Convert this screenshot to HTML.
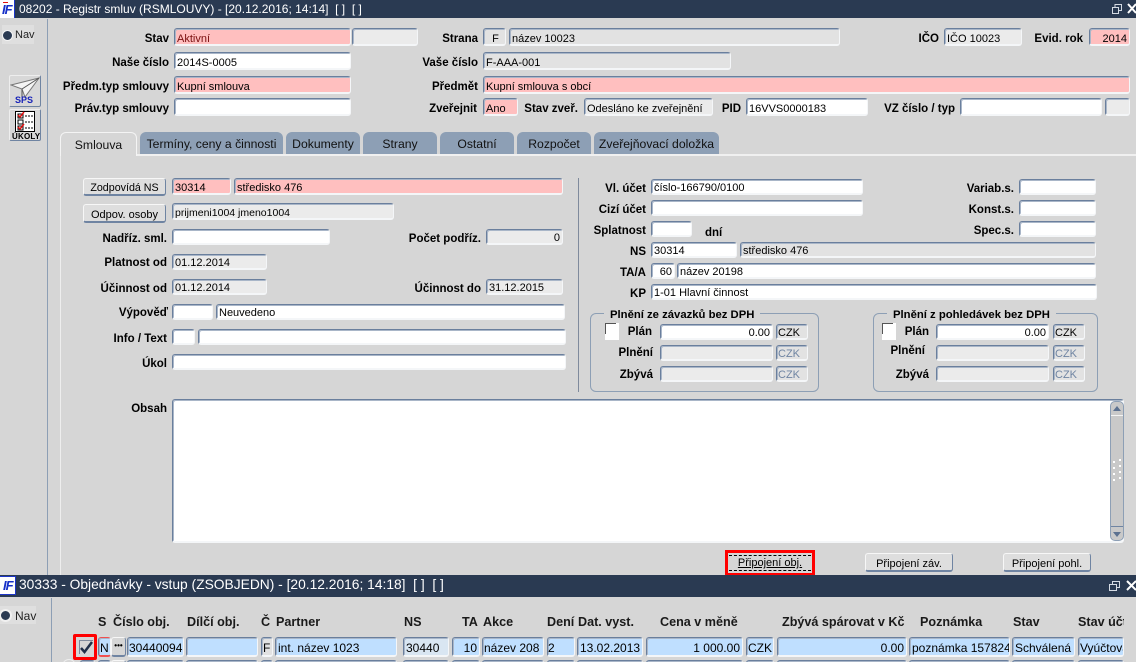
<!DOCTYPE html>
<html><head><meta charset="utf-8"><style>
html,body{margin:0;padding:0;background:#d6d6d6}
#p{position:relative;width:1136px;height:662px;overflow:hidden;background:#d6d6d6;font:11px "Liberation Sans",sans-serif;color:#000}
#p div,#p b,#p span{position:absolute;white-space:nowrap}
.t{left:0;width:1136px;background:#2a3a52}
.tt{color:#fff;line-height:18px}
.f{box-sizing:border-box;border:1px solid #6a7f9d;border-right:1px solid #f4f6f8;border-bottom:2px solid #f4f6f8;border-radius:3px;box-shadow:inset 1px 1px 0 #a9b6c8;padding-left:2px;line-height:13px;overflow:hidden;background:#fff}
.f[style*="height:18px"]{padding-top:3px;line-height:15px}
.f[style*="height:17px"]{padding-top:3px}
.f[style*="height:16px"]{padding-top:2px}
.g{background:#ebebeb}.e{background:#e2e2e2}.r{background:#ffbfbf}.u{text-align:right;padding-right:2px;padding-left:0}
.c{background:#e2e2e2;color:#6f84a2;font-size:11px}
.f.bl{background:#bfdfff;font-size:12px;line-height:16px;padding-top:2px}
.l{left:0;text-align:right;font-weight:bold;line-height:14px;height:14px;font-size:11.500px;margin-top:1px}
.h{font-weight:bold;font-size:12.600px;line-height:14px;top:615px;color:#1a1a1a}
.tab{top:132px;height:22px;box-sizing:border-box;background:#8d9fb5;border-radius:6px 6px 0 0;text-align:center;font-size:12.200px;line-height:25px;color:#111}
.btn{box-sizing:border-box;background:#dedede;border:1px solid #f7f7f7;border-right:1px solid #6f84a2;border-bottom:2px solid #6f84a2;border-radius:3px;text-align:center;font-size:11px}
.box{box-sizing:border-box;border:1px solid #8d9fb5;border-radius:6px}
.leg{background:#d6d6d6;font-weight:bold;font-size:11.300px;top:308px;line-height:14px;padding:0 6px}
.cb{background:#fff;width:14px;height:17px;top:323px;box-sizing:border-box}
.cb span{left:0;top:0;width:10px;height:10px;border-left:1px solid #555;border-top:1px solid #555}
.logo{font:italic bold 13px/15px "Liberation Sans",sans-serif;color:#1630c8;letter-spacing:-1px}
</style></head><body><div id="p">

<div class="t" style="top:0;height:18px"></div>
<div style="left:0;top:0;width:15px;height:18px;background:#fff;border-right:1px solid #1d35c8;box-sizing:border-box"></div>
<b class="logo" style="left:2px;top:2px">IF</b>
<div style="left:3px;top:2px;width:5px;height:1px;background:#e01010"></div>
<div class="tt" style="left:19px;top:0;font-size:12px">08202 - Registr smluv (RSMLOUVY) - [20.12.2016; 14:14]&nbsp; [ ]&nbsp; [ ]</div>
<svg style="position:absolute;left:1110px;top:2px" width="26" height="14" fill="none" stroke="#fff"><path d="M2.500 5.500h6v6h-6zM5 5V2.500h6.500v6H9" stroke="#d5dbe4"/><path d="M18 2l8 9M26 2l-8 9" stroke-width="2"/></svg>

<div style="left:47px;top:19px;width:1px;height:556px;background:#8d9fb5"></div>
<div style="left:2px;top:25px;width:32px;height:19px;background:#dfdfdf"></div>
<div style="left:2px;top:30px;width:9px;height:9px;border-radius:50%;background:#2a3a52;border:1px solid #f4f4f4"></div>
<div style="left:15px;top:28px;line-height:14px;color:#222">Nav</div>

<div style="left:9px;top:75px;width:32px;height:32px;box-sizing:border-box;background:#d8d8d8;border:1px solid #eee;border-right:1px solid #6f84a2;border-bottom:1px solid #6f84a2;border-radius:2px"></div>
<svg style="position:absolute;left:10px;top:77px" width="30" height="20"><path d="M1 8l28-7-14 19-3-8z" fill="#f4f4f4" stroke="#777"/><path d="M12 12l17-11M12 12v8l3 0" fill="none" stroke="#555"/></svg>
<b style="left:15px;top:95px;font-size:9px;line-height:10px;color:#1722b8">SPS</b>
<div style="left:9px;top:109px;width:32px;height:32px;box-sizing:border-box;background:#d8d8d8;border:1px solid #eee;border-right:1px solid #6f84a2;border-bottom:1px solid #6f84a2;border-radius:2px"></div>
<svg style="position:absolute;left:15px;top:111px" width="20" height="21"><rect x=".5" y=".5" width="19" height="20" fill="#fff" stroke="#000"/><path d="M3 3h5v4H3zM3 9h5v4H3zM3 15h5v4H3z" fill="#fff" stroke="#000"/><path d="M3 4l2 2 4-5M3 16l2 2 4-5" fill="none" stroke="#e01010" stroke-width="1.500"/><path d="M10 5h8M10 11h8M10 17h8" stroke="#000" stroke-dasharray="2 1"/></svg>
<b style="left:12px;top:132px;font-size:8px;line-height:9px;letter-spacing:.2px">ÚKOLY</b>

<b class="l" style="width:169px;top:31px">Stav</b>
<div class="f r" style="left:174px;top:28px;width:177px;height:18px;color:#7a1010">Aktivní</div>
<div class="f g" style="left:352px;top:28px;width:66px;height:18px"></div>
<b class="l" style="width:478px;top:31px">Strana</b>
<div class="f e" style="left:483px;top:28px;width:23px;height:18px;text-align:center">F</div>
<div class="f e" style="left:509px;top:28px;width:331px;height:18px">název 10023</div>
<b class="l" style="width:939px;top:31px">IČO</b>
<div class="f g" style="left:944px;top:28px;width:78px;height:18px">IČO 10023</div>
<b class="l" style="width:1083px;top:31px">Evid. rok</b>
<div class="f r u" style="left:1089px;top:28px;width:41px;height:18px">2014</div>

<b class="l" style="width:169px;top:55px">Naše číslo</b>
<div class="f" style="left:174px;top:52px;width:177px;height:18px">2014S-0005</div>
<b class="l" style="width:478px;top:55px">Vaše číslo</b>
<div class="f e" style="left:483px;top:52px;width:248px;height:18px">F-AAA-001</div>

<b class="l" style="width:169px;top:79px">Předm.typ smlouvy</b>
<div class="f r" style="left:174px;top:76px;width:177px;height:18px">Kupní smlouva</div>
<b class="l" style="width:478px;top:79px">Předmět</b>
<div class="f r" style="left:483px;top:76px;width:647px;height:18px">Kupní smlouva s obcí</div>

<b class="l" style="width:169px;top:101px">Práv.typ smlouvy</b>
<div class="f" style="left:174px;top:98px;width:177px;height:18px"></div>
<b class="l" style="width:477px;top:101px">Zveřejnit</b>
<div class="f r" style="left:483px;top:98px;width:35px;height:18px">Ano</div>
<b class="l" style="width:578px;top:101px">Stav zveř.</b>
<div class="f g" style="left:584px;top:98px;width:129px;height:18px">Odesláno ke zveřejnění</div>
<b class="l" style="width:741px;top:101px">PID</b>
<div class="f" style="left:746px;top:98px;width:122px;height:18px">16VVS0000183</div>
<b class="l" style="width:955px;top:101px">VZ číslo / typ</b>
<div class="f" style="left:960px;top:98px;width:142px;height:18px"></div>
<div class="f g" style="left:1105px;top:98px;width:25px;height:18px"></div>

<div style="left:60px;top:154px;width:1076px;height:2px;background:#f0f0f0"></div>
<div style="left:60px;top:154px;width:1px;height:421px;background:#eeeeee"></div>
<div class="tab" style="left:60px;width:77px;height:24px;background:#d6d6d6;border:1px solid #f4f4f4;border-bottom:0;line-height:25px">Smlouva</div>
<div class="tab" style="left:140px;width:143px">Termíny, ceny a činnosti</div>
<div class="tab" style="left:286px;width:74px">Dokumenty</div>
<div class="tab" style="left:363px;width:74px">Strany</div>
<div class="tab" style="left:440px;width:74px">Ostatní</div>
<div class="tab" style="left:517px;width:74px">Rozpočet</div>
<div class="tab" style="left:594px;width:125px">Zveřejňovací doložka</div>

<div class="btn" style="left:83px;top:178px;width:83px;height:18px;line-height:18px;font-size:10.700px">Zodpovídá NS</div>
<div class="f r" style="left:172px;top:178px;width:59px;height:17px">30314</div>
<div class="f r" style="left:234px;top:178px;width:329px;height:17px">středisko 476</div>
<div class="btn" style="left:83px;top:204px;width:83px;height:19px;line-height:20px">Odpov. osoby</div>
<div class="f g" style="left:172px;top:203px;width:222px;height:17px;font-size:10.500px">prijmeni1004 jmeno1004</div>
<b class="l" style="width:167px;top:231px">Nadříz. sml.</b>
<div class="f" style="left:172px;top:229px;width:158px;height:16px"></div>
<b class="l" style="width:481px;top:231px">Počet podříz.</b>
<div class="f g u" style="left:486px;top:229px;width:77px;height:16px">0</div>
<b class="l" style="width:167px;top:255px">Platnost od</b>
<div class="f g" style="left:172px;top:254px;width:95px;height:16px">01.12.2014</div>
<b class="l" style="width:167px;top:281px">Účinnost od</b>
<div class="f g" style="left:172px;top:279px;width:95px;height:16px">01.12.2014</div>
<b class="l" style="width:481px;top:281px">Účinnost do</b>
<div class="f g" style="left:486px;top:279px;width:77px;height:16px">31.12.2015</div>
<b class="l" style="width:168px;top:305px">Výpověď</b>
<div class="f" style="left:172px;top:304px;width:41px;height:16px"></div>
<div class="f" style="left:216px;top:304px;width:349px;height:16px">Neuvedeno</div>
<b class="l" style="width:167px;top:331px">Info / Text</b>
<div class="f" style="left:172px;top:329px;width:23px;height:16px"></div>
<div class="f" style="left:198px;top:329px;width:368px;height:16px"></div>
<b class="l" style="width:167px;top:356px">Úkol</b>
<div class="f" style="left:172px;top:354px;width:394px;height:16px"></div>

<div style="left:578px;top:178px;width:1px;height:214px;background:#7f8a9c"></div>

<b class="l" style="width:646px;top:181px">Vl. účet</b>
<div class="f" style="left:651px;top:179px;width:212px;height:16px">číslo-166790/0100</div>
<b class="l" style="width:1014px;top:181px">Variab.s.</b>
<div class="f" style="left:1019px;top:179px;width:77px;height:16px"></div>
<b class="l" style="width:646px;top:202px">Cizí účet</b>
<div class="f" style="left:651px;top:200px;width:212px;height:16px"></div>
<b class="l" style="width:1014px;top:202px">Konst.s.</b>
<div class="f" style="left:1019px;top:200px;width:77px;height:16px"></div>
<b class="l" style="width:646px;top:223px">Splatnost</b>
<div class="f" style="left:651px;top:221px;width:41px;height:16px"></div>
<b class="l" style="left:705px;width:auto;top:225px">dní</b>
<b class="l" style="width:1014px;top:223px">Spec.s.</b>
<div class="f" style="left:1019px;top:221px;width:77px;height:16px"></div>
<b class="l" style="width:646px;top:244px">NS</b>
<div class="f" style="left:651px;top:242px;width:86px;height:16px">30314</div>
<div class="f e" style="left:740px;top:242px;width:356px;height:16px">středisko 476</div>
<b class="l" style="width:646px;top:265px">TA/A</b>
<div class="f u" style="left:651px;top:263px;width:24px;height:16px">60</div>
<div class="f" style="left:677px;top:263px;width:419px;height:16px">název 20198</div>
<b class="l" style="width:646px;top:286px">KP</b>
<div class="f" style="left:651px;top:284px;width:446px;height:16px">1-01 Hlavní činnost</div>

<div class="box" style="left:590px;top:313px;width:229px;height:79px"></div>
<b class="leg" style="left:604px">Plnění ze závazků bez DPH</b>
<div class="cb" style="left:605px"><span></span></div>
<b class="l" style="width:652px;top:324px">Plán</b>
<div class="f u" style="left:660px;top:324px;width:113px;height:16px">0.00</div>
<div class="f e" style="left:776px;top:324px;width:32px;height:16px;padding-left:1px">CZK</div>
<b class="l" style="width:653px;top:345px">Plnění</b>
<div class="f g" style="left:660px;top:345px;width:113px;height:16px"></div>
<div class="f c" style="left:776px;top:345px;width:32px;height:16px;padding-left:1px">CZK</div>
<b class="l" style="width:653px;top:367px">Zbývá</b>
<div class="f g" style="left:660px;top:366px;width:113px;height:16px"></div>
<div class="f c" style="left:776px;top:366px;width:32px;height:16px;padding-left:1px">CZK</div>

<div class="box" style="left:873px;top:313px;width:225px;height:79px"></div>
<b class="leg" style="left:887px">Plnění z pohledávek bez DPH</b>
<div class="cb" style="left:882px"><span></span></div>
<b class="l" style="width:929px;top:324px">Plán</b>
<div class="f u" style="left:936px;top:324px;width:113px;height:16px">0.00</div>
<div class="f e" style="left:1053px;top:324px;width:32px;height:16px;padding-left:1px">CZK</div>
<b class="l" style="width:925px;top:343px">Plnění</b>
<div class="f g" style="left:936px;top:345px;width:113px;height:16px"></div>
<div class="f c" style="left:1053px;top:345px;width:32px;height:16px;padding-left:1px">CZK</div>
<b class="l" style="width:929px;top:367px">Zbývá</b>
<div class="f g" style="left:936px;top:366px;width:113px;height:16px"></div>
<div class="f c" style="left:1053px;top:366px;width:32px;height:16px;padding-left:1px">CZK</div>

<b class="l" style="width:167px;top:401px">Obsah</b>
<div class="f" style="left:172px;top:399px;width:952px;height:144px"></div>
<div style="left:1110px;top:401px;width:14px;height:140px;box-sizing:border-box;background:#c9c9c9;border:1px solid #8d9fb5;border-radius:5px"></div>
<div style="left:1111px;top:415px;width:12px;height:1px;background:#f4f4f4"></div>
<div style="left:1111px;top:526px;width:12px;height:1px;background:#6f84a2"></div>
<svg style="position:absolute;left:1110px;top:401px" width="14" height="140"><path d="M3 10l4-5 4 5z" fill="#5c7190"/><path d="M3 131h8l-4 5z" fill="#5c7190"/><path d="M3 60h2v2H3zM9 58h2v2H9zM3 66h2v2H3zM9 64h2v2H9zM3 72h2v2H3zM9 70h2v2H9zM3 78h2v2H3zM9 76h2v2H9z" fill="#fff"/></svg>

<div style="left:725px;top:550px;width:90px;height:26px;box-sizing:border-box;border:3px solid #ff0000;background:#d6d6d6"></div>
<div style="left:729px;top:555px;width:82px;height:16px;box-sizing:border-box;border-top:1px dashed #000;border-bottom:1px dashed #000;text-align:center;line-height:15px;text-decoration:underline">Připojení obj.</div>
<div class="btn" style="left:865px;top:553px;width:88px;height:19px;line-height:20px">Připojení záv.</div>
<div class="btn" style="left:1003px;top:553px;width:88px;height:19px;line-height:20px">Připojení pohl.</div>

<div class="t" style="top:575px;height:22px"></div>
<div style="left:-2px;top:576px;width:18px;height:19px;background:#fff;border:1px solid #1d35c8;box-sizing:border-box"></div>
<b class="logo" style="left:3px;top:578px">IF</b>
<div class="tt" style="left:19px;top:576px;font-size:13.800px">30333 - Objednávky - vstup (ZSOBJEDN) - [20.12.2016; 14:18]&nbsp; [ ]&nbsp; [ ]</div>
<svg style="position:absolute;left:1107px;top:578px" width="29" height="15" fill="none" stroke="#fff"><path d="M2.500 6.500h7v6h-7zM5.500 6V3.500h7v6H10" stroke="#d5dbe4"/><path d="M20 3l9 9M29 3l-9 9" stroke-width="2"/></svg>

<div style="left:51px;top:598px;width:1px;height:64px;background:#8d9fb5"></div>
<div style="left:0;top:606px;width:36px;height:18px;background:#dfdfdf"></div>
<div style="left:-1px;top:609px;width:9px;height:9px;border-radius:50%;background:#2a3a52;border:2px solid #f0f0f0"></div>
<div style="left:15px;top:609px;line-height:14px;color:#222;font-size:12px">Nav</div>

<b class="h" style="left:98px">S</b>
<b class="h" style="left:113px">Číslo obj.</b>
<b class="h" style="left:187px">Dílčí obj.</b>
<b class="h" style="left:261px">Č</b>
<b class="h" style="left:276px">Partner</b>
<b class="h" style="left:404px">NS</b>
<b class="h" style="left:462px">TA</b>
<b class="h" style="left:483px">Akce</b>
<b class="h" style="left:547px">Dení</b>
<b class="h" style="left:578px">Dat. vyst.</b>
<b class="h" style="left:660px">Cena v měně</b>
<b class="h" style="left:782px">Zbývá spárovat v Kč</b>
<b class="h" style="left:920px">Poznámka</b>
<b class="h" style="left:1013px">Stav</b>
<div style="left:1078px;top:615px;width:46px;height:14px;overflow:hidden"><b class="h" style="left:0;top:0">Stav účtu</b></div>

<div style="left:73px;top:634px;width:24px;height:26px;box-sizing:border-box;background:#d6d6d6;border:3px solid #ff0000;border-radius:2px"></div>
<svg style="position:absolute;left:79px;top:640px" width="15" height="15" fill="none"><path d="M.5 14V.5H14" stroke="#7f8a9c"/><path d="M2 8l3.500 4L13 2" stroke="#20304a" stroke-width="2.500"/></svg>
<div class="f bl" style="left:98px;top:637px;width:13px;height:20px;padding-left:1px;border-top-color:#f05050;border-bottom-color:#f05050">N</div>
<div class="btn" style="left:111px;top:637px;width:15px;height:20px;line-height:16px;font-size:8px;font-weight:bold;background:#d6d6d6">•••</div>
<div class="f bl" style="left:127px;top:637px;width:57px;height:20px;padding-left:1px">30440094</div>
<div class="f bl" style="left:186px;top:637px;width:72px;height:20px"></div>
<div class="f bl" style="left:261px;top:637px;width:12px;height:20px;padding-left:1px;background:#e2e2e2">F</div>
<div class="f bl" style="left:275px;top:637px;width:122px;height:20px">int. název 1023</div>
<div class="f bl" style="left:403px;top:637px;width:46px;height:20px;background:#d9e6f2">30440</div>
<div class="f bl u" style="left:452px;top:637px;width:28px;height:20px">10</div>
<div class="f bl" style="left:482px;top:637px;width:62px;height:20px;padding-left:1px">název 208</div>
<div class="f bl" style="left:547px;top:637px;width:28px;height:20px;padding-left:0">2</div>
<div class="f bl" style="left:577px;top:637px;width:66px;height:20px">13.02.2013</div>
<div class="f bl u" style="left:646px;top:637px;width:97px;height:20px">1 000.00</div>
<div class="f bl" style="left:746px;top:637px;width:28px;height:20px;padding-left:1px">CZK</div>
<div class="f bl u" style="left:777px;top:637px;width:130px;height:20px">0.00</div>
<div class="f bl" style="left:909px;top:637px;width:101px;height:20px">poznámka 157824</div>
<div class="f bl" style="left:1012px;top:637px;width:63px;height:20px">Schválená</div>
<div class="f bl" style="left:1078px;top:637px;width:46px;height:20px;padding-left:1px">Vyúčtování</div>

<div style="left:62px;top:659px;width:12px;height:12px;border-radius:50%;border:1px solid #eee;background:#d6d6d6"></div>
<div class="f bl" style="left:80px;top:660px;width:15px;height:12px;background:#d6d6d6"></div>
<div class="f bl" style="left:98px;top:660px;width:13px;height:12px"></div>
<div class="btn" style="left:111px;top:660px;width:15px;height:12px"></div>
<div class="f bl" style="left:127px;top:660px;width:57px;height:12px"></div>
<div class="f bl" style="left:186px;top:660px;width:72px;height:12px"></div>
<div class="f bl" style="left:261px;top:660px;width:12px;height:12px"></div>
<div class="f bl" style="left:275px;top:660px;width:122px;height:12px"></div>
<div class="f bl" style="left:403px;top:660px;width:46px;height:12px"></div>
<div class="f bl" style="left:452px;top:660px;width:28px;height:12px"></div>
<div class="f bl" style="left:482px;top:660px;width:62px;height:12px"></div>
<div class="f bl" style="left:547px;top:660px;width:28px;height:12px"></div>
<div class="f bl" style="left:577px;top:660px;width:66px;height:12px"></div>
<div class="f bl" style="left:646px;top:660px;width:97px;height:12px"></div>
<div class="f bl" style="left:746px;top:660px;width:28px;height:12px"></div>
<div class="f bl" style="left:777px;top:660px;width:130px;height:12px"></div>
<div class="f bl" style="left:909px;top:660px;width:101px;height:12px"></div>
<div class="f bl" style="left:1012px;top:660px;width:63px;height:12px"></div>
<div class="f bl" style="left:1078px;top:660px;width:46px;height:12px"></div>

</div></body></html>
